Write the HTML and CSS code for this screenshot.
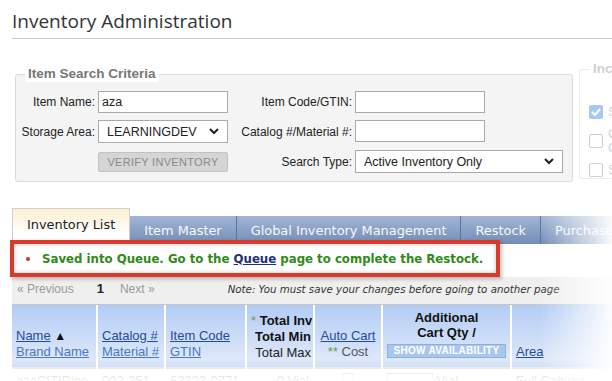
FILE: index.html
```html
<!DOCTYPE html>
<html lang="en">
<head>
  <meta charset="UTF-8">
  <title>Inventory Administration</title>
  <link rel="stylesheet" href="styles.css">
</head>
<body>

  <div class="page">
    <h1 class="page-title">Inventory Administration</h1>

    <div class="search-area">
      <fieldset class="criteria">
        <legend>Item Search Criteria</legend>
        <div class="criteria-grid">
          <label>Item Name:</label>
          <input type="text" value="aza">
          <label>Item Code/GTIN:</label>
          <input type="text" class="short">

          <label>Storage Area:</label>
          <div class="fake-select">
            <span>LEARNINGDEV</span>
            <svg width="10" height="7" viewBox="0 0 10 7"><polyline points="1,1 5,5 9,1" fill="none" stroke="#222" stroke-width="2"/></svg>
          </div>
          <label>Catalog #/Material #:</label>
          <input type="text" class="short">

          <span></span>
          <button class="verify" disabled>VERIFY INVENTORY</button>
          <label>Search Type:</label>
          <div class="fake-select">
            <span>Active Inventory Only</span>
            <svg width="10" height="7" viewBox="0 0 10 7"><polyline points="1,1 5,5 9,1" fill="none" stroke="#222" stroke-width="2"/></svg>
          </div>
        </div>
      </fieldset>

      <fieldset class="include">
        <legend>Inc</legend>
        <div class="check-row"><span class="box checked"><svg width="10" height="8" viewBox="0 0 10 8"><polyline points="1,4 4,7 9,1" fill="none" stroke="#fff" stroke-width="2"/></svg></span>S</div>
        <div class="check-row"><span class="box"></span>O<br>C</div>
        <div class="check-row"><span class="box"></span>S</div>
      </fieldset>
    </div>

    <div class="tabs">
      <div class="tab active">Inventory List</div>
      <div class="tab">Item Master</div>
      <div class="tab">Global Inventory Management</div>
      <div class="tab">Restock</div>
      <div class="tab">Purchase</div>
    </div>

    <div class="notice">
      <span class="bullet"></span>
      <span>Saved into Queue. Go to the <a href="#">Queue</a> page to complete the Restock.</span>
    </div>

    <div class="pager">
      <span class="pager-off">« Previous</span>
      <span class="pager-current">1</span>
      <span class="pager-off next">Next »</span>
      <span class="pager-note">Note: You must save your changes before going to another page</span>
    </div>

    <table class="grid">
      <colgroup>
        <col style="width:84px"><col style="width:66px"><col style="width:79px"><col style="width:66px"><col style="width:66px"><col style="width:127px"><col style="width:100px">
      </colgroup>
      <thead>
        <tr>
          <th><a href="#" class="main-link">Name</a> <span class="sort">▲</span><br><a href="#" class="sub-link">Brand Name</a></th>
          <th><a href="#" class="main-link">Catalog #</a><br><a href="#" class="sub-link">Material #</a></th>
          <th><a href="#" class="main-link">Item Code</a><br><a href="#" class="sub-link">GTIN</a></th>
          <th class="totals"><span class="star">*</span> <b>Total Inv</b><br><b>Total Min</b><br>Total Max</th>
          <th class="center"><a href="#" class="main-link">Auto Cart</a><br><span class="star">**</span> <span class="muted">Cost</span></th>
          <th class="center additional"><b>Additional<br>Cart Qty /</b><br><button class="avail">SHOW AVAILABILITY</button></th>
          <th><a href="#" class="main-link">Area</a></th>
        </tr>
      </thead>
      <tbody>
        <tr>
          <td>azaCITIDine</td>
          <td>003-351</td>
          <td>63323-0771-</td>
          <td class="right">0 Vial</td>
          <td class="center"><span class="box small"></span></td>
          <td><span class="qty"></span> Vial</td>
          <td>Full Cabinet -</td>
        </tr>
      </tbody>
    </table>
  </div>

  <div class="fade-right"></div>
  <div class="fade-bottom"></div>

</body>
</html>
```

FILE: styles.css
```css
* {
  box-sizing: border-box;
}

html, body {
  margin: 0;
  height: 100%;
}

body {
  font-family: "Liberation Sans", Arial, sans-serif;
  font-size: 13px;
  color: #222;
  background: #fff;
  overflow: hidden;
  position: relative;
}

.page {
  padding-left: 12px;
  width: 612px;
  overflow: hidden;
}

.page-title {
  margin: 0;
  height: 39px;
  padding-top: 6px;
  font-family: "Open Sans", sans-serif;
  font-weight: 400;
  font-size: 19px;
  line-height: 30px;
  color: #333;
  border-bottom: 1px solid #ccc;
}

/* search criteria */
.search-area {
  display: flex;
  align-items: flex-start;
  gap: 6px;
  margin-top: 27px;
  margin-left: 3px;
}

fieldset {
  margin: 0;
  border: 1px solid #dcdcdc;
  border-radius: 3px;
}

fieldset legend {
  margin-left: 9px;
  padding: 0 3px;
  background: #fff;
  border-radius: 3px;
  font-weight: bold;
  font-size: 13.5px;
  line-height: 16px;
  color: #777;
}

.criteria {
  flex-shrink: 0;
  width: 558px;
  padding: 9px 0 8px 0;
  background: #f4f4f4;
  font-size: 12px;
}

.criteria-grid {
  display: grid;
  grid-template-columns: 79px 130px 121px 208px;
  column-gap: 3px;
  row-gap: 7px;
}

.criteria-grid label {
  align-self: center;
  text-align: right;
  white-space: nowrap;
}

.criteria-grid input {
  height: 22px;
  width: 130px;
  padding: 0 3px;
  border: 1px solid #aaa;
  font-family: "Liberation Sans", Arial, sans-serif;
  font-size: 12.5px;
  color: #222;
  background: #fff;
}

.fake-select {
  height: 23px;
  display: flex;
  align-items: center;
  justify-content: space-between;
  padding: 0 8px 0 7px;
  border: 1px solid #aaa;
  background: #fff;
  font-size: 12.5px;
}

.fake-select span {
  padding-left: 1px;
}

.verify {
  align-self: center;
  height: 20px;
  border: 1px solid #c2c2c2;
  border-radius: 2px;
  background: #d5d5d5;
  color: #8a8a8a;
  font-family: "Liberation Sans", Arial, sans-serif;
  font-size: 11px;
  letter-spacing: 0.3px;
}

.include {
  flex-shrink: 0;
  width: 60px;
  height: 118px;
  margin-top: -5px;
  padding: 20px 0 0 9px;
  color: #d4d4d4;
  border-color: #ececec;
}

.include legend {
  color: #d0d0d0;
  margin-left: 1px;
}

.check-row {
  display: flex;
  align-items: center;
  gap: 5px;
  height: 29px;
  line-height: 14px;
}

.box {
  display: inline-flex;
  align-items: center;
  justify-content: center;
  width: 14px;
  height: 14px;
  border: 1px solid #cfcfcf;
  border-radius: 2px;
  background: #fff;
}

.box.checked {
  background: #a8c9f5;
  border-color: #a8c9f5;
}

/* tabs */
.tabs {
  display: flex;
  align-items: flex-end;
  height: 36px;
  margin-top: 26px;
  font-family: "DejaVu Sans", Verdana, sans-serif;
  font-size: 12.9px;
  white-space: nowrap;
}

.tab {
  flex-shrink: 0;
  height: 28px;
  padding: 0 14px;
  line-height: 30px;
  color: #f6f8fc;
  background: linear-gradient(#a2b5d4, #738db5);
  border-right: 1px solid #5a75a0;
}

.tab.active {
  height: 36px;
  padding: 0 14px;
  line-height: 32px;
  color: #222;
  background: linear-gradient(#fcefd2, #fff 70%);
  border: 1px solid #cfcfcf;
  border-bottom: none;
}

/* message */
.notice {
  position: relative;
  display: flex;
  align-items: center;
  gap: 12px;
  width: 490px;
  height: 37px;
  margin: -4px 0 0 -2px;
  padding-left: 12px;
  border: 4px solid #d93a2a;
  background: #fff;
  box-shadow: inset 0 0 4px rgba(0, 0, 0, 0.25), 2px 2px 4px rgba(0, 0, 0, 0.25);
  font-family: "DejaVu Sans", Verdana, sans-serif;
  font-weight: bold;
  font-size: 11.75px;
  color: #2f8a18;
  white-space: nowrap;
}

.notice a {
  color: #1b2f7a;
}

.bullet {
  width: 4px;
  height: 4px;
  border-radius: 50%;
  background: #c0392b;
}

/* pager */
.pager {
  display: flex;
  height: 28px;
  padding-left: 5px;
  line-height: 24px;
  background: #efefef;
  border-bottom: 1px solid #c8c8c8;
  font-size: 12px;
  white-space: nowrap;
}

.pager-off {
  color: #9a9a9a;
}

.pager-current {
  margin-left: 23px;
  font-weight: bold;
  font-size: 13px;
  color: #222;
}

.pager-off.next {
  margin-left: 16px;
}

.pager-note {
  margin-left: 73px;
  font-family: "DejaVu Sans", Verdana, sans-serif;
  font-style: italic;
  font-size: 10.25px;
  color: #333;
}

/* results grid */
.grid {
  table-layout: fixed;
  width: 602px;
  margin-left: -2px;
  border-collapse: separate;
  border-spacing: 2px 0;
}

.grid th {
  height: 64px;
  padding: 0 4px 9px;
  vertical-align: bottom;
  text-align: left;
  font-weight: normal;
  line-height: 16px;
  white-space: nowrap;
  background: linear-gradient(#b3ccf5, #dde8fa 85%, #cfdcef);
}

.grid th.center,
.grid td.center {
  text-align: center;
}

.grid th.totals {
  text-align: right;
  padding-right: 2px;
  padding-bottom: 8px;
}

.grid th.additional {
  padding-bottom: 11px;
  line-height: 15px;
}

.main-link {
  color: #1f4c9a;
}

.sub-link {
  color: #4a78bd;
}

.sort {
  font-size: 12px;
  color: #111;
}

.star {
  color: #6b9e3a;
}

.muted {
  color: #555;
}

.grid th b {
  color: #111;
}

.avail {
  margin-top: 4px;
  height: 14px;
  padding: 0 5px;
  border: 1px solid #8eb0dc;
  background: #a9c6ee;
  color: #fff;
  font-family: "Liberation Sans", Arial, sans-serif;
  font-weight: bold;
  font-size: 10px;
  line-height: 12px;
  letter-spacing: 0.3px;
}

.grid td {
  padding: 4px 4px 0;
  color: #999;
  white-space: nowrap;
  overflow: hidden;
  vertical-align: top;
}

.grid td.right {
  text-align: right;
}

.box.small {
  width: 12px;
  height: 12px;
}

.qty {
  display: inline-block;
  width: 46px;
  height: 18px;
  border: 1px solid #ccc;
  vertical-align: top;
}

/* screenshot edge fades */
.fade-right {
  position: absolute;
  top: 190px;
  right: 0;
  width: 72px;
  height: 200px;
  background: linear-gradient(to right, rgba(255, 255, 255, 0), rgba(255, 255, 255, 0.95));
}

.fade-bottom {
  position: absolute;
  left: 0;
  bottom: 0;
  width: 100%;
  height: 14px;
  background: linear-gradient(rgba(255, 255, 255, 0.4), rgba(255, 255, 255, 0.9));
}
```
